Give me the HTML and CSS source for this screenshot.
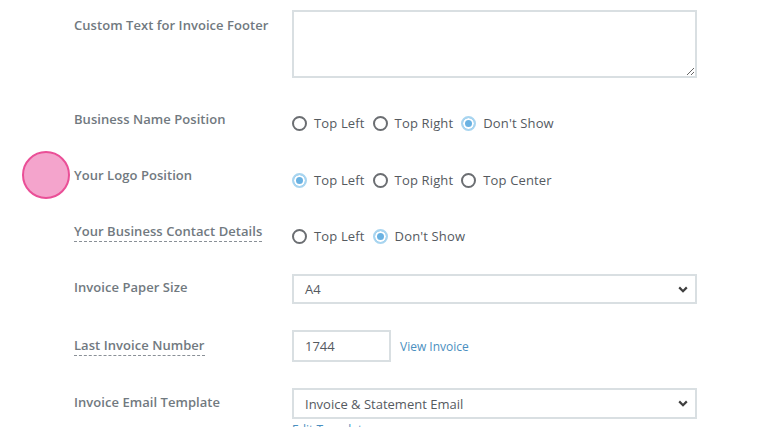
FILE: index.html
```html
<!DOCTYPE html>
<html>
<head>
<meta charset="utf-8">
<link rel="stylesheet" href="styles.css">
</head>
<body>
<form class="settings">
  <div class="row row-first">
    <label class="lbl lbl-area">Custom Text for Invoice Footer</label>
    <textarea class="area"></textarea>
  </div>
  <div class="row row-loose">
    <label class="lbl lbl-radio1">Business Name Position</label>
    <div class="radios">
      <span class="opt"><span class="rad"></span>Top Left</span>
      <span class="opt"><span class="rad"></span>Top Right</span>
      <span class="opt"><span class="rad on"></span>Don't Show</span>
    </div>
  </div>
  <div class="row">
    <label class="lbl lbl-radio">Your Logo Position</label>
    <div class="radios">
      <span class="opt"><span class="rad on"></span>Top Left</span>
      <span class="opt"><span class="rad"></span>Top Right</span>
      <span class="opt"><span class="rad"></span>Top Center</span>
    </div>
  </div>
  <div class="row row-tight">
    <label class="lbl lbl-radio"><span class="dashed">Your Business Contact Details</span></label>
    <div class="radios">
      <span class="opt"><span class="rad"></span>Top Left</span>
      <span class="opt"><span class="rad on"></span>Don't Show</span>
    </div>
  </div>
  <div class="row">
    <label class="lbl lbl-select">Invoice Paper Size</label>
    <div class="select">A4<svg class="chev" width="10" height="7" viewBox="0 0 10 7"><path d="M1.2 1.4 L5 5.2 L8.8 1.4" fill="none" stroke="#3f3f3f" stroke-width="2.2"/></svg></div>
  </div>
  <div class="row">
    <label class="lbl lbl-input"><span class="dashed">Last Invoice Number</span></label>
    <div class="inline">
      <div class="num">1744</div>
      <a class="link">View Invoice</a>
    </div>
  </div>
  <div class="row">
    <label class="lbl lbl-select2">Invoice Email Template</label>
    <div class="stack">
      <div class="select select-email">Invoice &amp; Statement Email<svg class="chev" width="10" height="7" viewBox="0 0 10 7"><path d="M1.2 1.4 L5 5.2 L8.8 1.4" fill="none" stroke="#3f3f3f" stroke-width="2.2"/></svg></div>
      <a class="link sub">Edit Template</a>
    </div>
  </div>
</form>
<div class="touch"></div>
</body>
</html>
```
FILE: styles.css
```css
html, body {
  margin: 0;
  padding: 0;
  background: #fff;
  overflow: hidden;
}
body {
  font-family: "Open Sans", "Liberation Sans", sans-serif;
  width: 764px;
  height: 427px;
  position: relative;
}
.settings {
  padding: 10px 0 0 74px;
  display: flex;
  flex-direction: column;
}
.row {
  display: flex;
  align-items: flex-start;
  margin-bottom: 26px;
}
.row-first { margin-bottom: 30px; }
.row-loose { margin-bottom: 27px; }
.row-tight { margin-bottom: 23px; }
.lbl {
  width: 218px;
  flex: none;
  font-size: 13px;
  font-weight: 600;
  line-height: 18px;
  color: #717980;
  letter-spacing: 0.05px;
}
.lbl-area { padding-top: 6px; }
.lbl-radio1 { padding-top: 2px; }
.lbl-radio { padding-top: 1px; }
.lbl-select { padding-top: 4px; }
.lbl-input { padding-top: 6px; }
.lbl-select2 { padding-top: 5px; }
.dashed {
  border-bottom: 1px dashed #8a9097;
  padding-bottom: 1px;
}
.area {
  width: 405px;
  height: 68px;
  box-sizing: border-box;
  border: 2px solid #d9dfe2;
  border-radius: 0;
  margin: 0;
  padding: 6px 10px;
  font-family: inherit;
  resize: both;
  outline: none;
}
.radios {
  height: 30px;
  display: flex;
  align-items: center;
  gap: 8px;
}
.opt {
  display: flex;
  align-items: center;
  gap: 7px;
  font-size: 13px;
  color: #555a5f;
  line-height: 18px;
  letter-spacing: 0.15px;
}
.rad {
  width: 15px;
  height: 15px;
  box-sizing: border-box;
  border-radius: 50%;
  border: 2px solid #6b6e72;
  background: #fff;
}
.rad.on {
  border-color: #a8d5f0;
  background: #6ab2e2;
  box-shadow: inset 0 0 0 2px #fff;
}
.select {
  width: 405px;
  height: 30px;
  box-sizing: border-box;
  border: 2px solid #d9dfe2;
  display: flex;
  align-items: center;
  justify-content: space-between;
  padding: 0 7px 0 11px;
  font-size: 13px;
  color: #555a5f;
}
.select-email { height: 31px; }
.chev { display: block; }
.inline {
  display: flex;
  align-items: center;
  gap: 9px;
}
.num {
  width: 99px;
  height: 32px;
  box-sizing: border-box;
  border: 2px solid #d9dfe2;
  padding: 0 11px;
  display: flex;
  align-items: center;
  font-size: 13px;
  color: #555a5f;
}
.link {
  font-size: 12px;
  color: #4a8fc0;
  text-decoration: none;
}
.stack {
  display: flex;
  flex-direction: column;
}
.sub {
  margin-top: 3px;
  line-height: 16px;
}
.touch {
  position: absolute;
  left: 22px;
  top: 151px;
  width: 48px;
  height: 48px;
  box-sizing: border-box;
  border-radius: 50%;
  background: #f4a4cc;
  border: 2px solid #ea4f97;
}
```
